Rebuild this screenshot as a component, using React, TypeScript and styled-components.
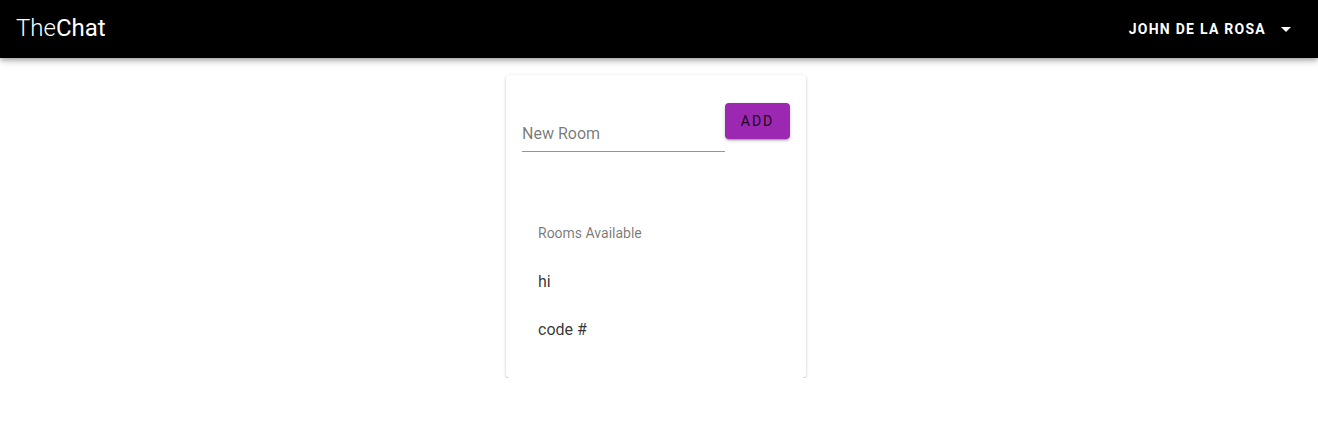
import React from "react";
import styled, { createGlobalStyle } from "styled-components";

const Global = createGlobalStyle`
  html, body { margin: 0; padding: 0; background: #fff; }
  body { font-family: Roboto, "Noto Sans", Arial, sans-serif; }
  * { box-sizing: border-box; }
`;

const AppBar = styled.header`
  height: 58px;
  background: #000;
  color: #fff;
  display: flex;
  align-items: center;
  justify-content: space-between;
  padding: 0 20px 0 16px;
  box-shadow: 0px 2px 4px -1px rgba(0,0,0,0.2), 0px 4px 5px 0px rgba(0,0,0,0.14), 0px 1px 10px 0px rgba(0,0,0,0.12);
  position: relative;
  z-index: 2;
`;

const Logo = styled.div`
  font-size: 24px;
  line-height: 1;
  display: flex;
  align-items: baseline;
  margin-top: -2px;
`;

const LogoPart = styled.span<{ $weight: number }>`
  font-weight: ${(p) => p.$weight};
`;

const UserButton = styled.button`
  background: transparent;
  border: 0;
  color: #fff;
  font-family: Roboto, Arial, sans-serif;
  font-size: 14px;
  font-weight: 700;
  letter-spacing: 0.09em;
  text-transform: uppercase;
  display: flex;
  align-items: center;
  gap: 8px;
  padding: 6px 0 6px 8px;
  cursor: pointer;
`;

const Main = styled.main`
  display: flex;
  justify-content: center;
  padding: 17px 6px 0 0;
`;

const Card = styled.section`
  width: 300px;
  background: #fff;
  border-radius: 4px;
  padding: 16px 16px 17px;
  box-shadow: 0px 2px 1px -1px rgba(0,0,0,0.22), 0px 1px 2px 0px rgba(0,0,0,0.16), 0px 1px 4px 0px rgba(0,0,0,0.12);
`;

const FormRow = styled.div`
  display: flex;
  align-items: flex-start;
`;

const Field = styled.label`
  display: flex;
  flex-direction: column;
  width: 203px;
  margin: 16px 0 8px;
  padding-top: 17px;
`;

const Input = styled.input`
  font-family: Roboto, Arial, sans-serif;
  font-size: 16px;
  height: 28px;
  padding: 0 0 9px;
  border: 0;
  border-bottom: 1px solid rgba(0,0,0,0.42);
  outline: none;
  color: rgba(0,0,0,0.87);
  background: transparent;
  &::placeholder { color: rgba(0,0,0,0.54); opacity: 1; }
`;

const AddButton = styled.button`
  margin-top: 12px;
  min-width: 64px;
  width: 65px;
  height: 36px;
  border: 0;
  border-radius: 4px;
  background: #9c27b0;
  color: rgba(0,0,0,0.87);
  font-family: Roboto, Arial, sans-serif;
  font-size: 14px;
  font-weight: 400;
  letter-spacing: 0.14em;
  text-transform: uppercase;
  padding: 6px 0;
  box-shadow: 0px 3px 1px -2px rgba(0,0,0,0.2), 0px 2px 2px 0px rgba(0,0,0,0.14), 0px 1px 5px 0px rgba(0,0,0,0.12);
  cursor: pointer;
`;

const List = styled.ul`
  list-style: none;
  margin: 41px 0 0;
  padding: 8px 0;
`;

const Subheader = styled.li`
  line-height: 48px;
  padding: 0 16px;
  font-size: 14px;
  color: rgba(0,0,0,0.54);
`;

const Item = styled.li`
  height: 48px;
  display: flex;
  align-items: center;
  padding: 0 16px;
  font-size: 16px;
  color: rgba(0,0,0,0.8);
`;

const rooms = ["hi", "code #"];

export default function App() {
  return (
    <>
      <Global />
      <AppBar>
        <Logo>
          <LogoPart $weight={300}>The</LogoPart>
          <LogoPart $weight={400}>Chat</LogoPart>
        </Logo>
        <UserButton>
          John De La Rosa
          <svg width="24" height="24" viewBox="0 0 24 24" fill="#fff">
            <path d="M7 10l5 5 5-5z" />
          </svg>
        </UserButton>
      </AppBar>
      <Main>
        <Card>
          <FormRow>
            <Field>
              <Input placeholder="New Room" />
            </Field>
            <AddButton>Add</AddButton>
          </FormRow>
          <List>
            <Subheader>Rooms Available</Subheader>
            {rooms.map((r) => (
              <Item key={r}>{r}</Item>
            ))}
          </List>
        </Card>
      </Main>
    </>
  );
}
